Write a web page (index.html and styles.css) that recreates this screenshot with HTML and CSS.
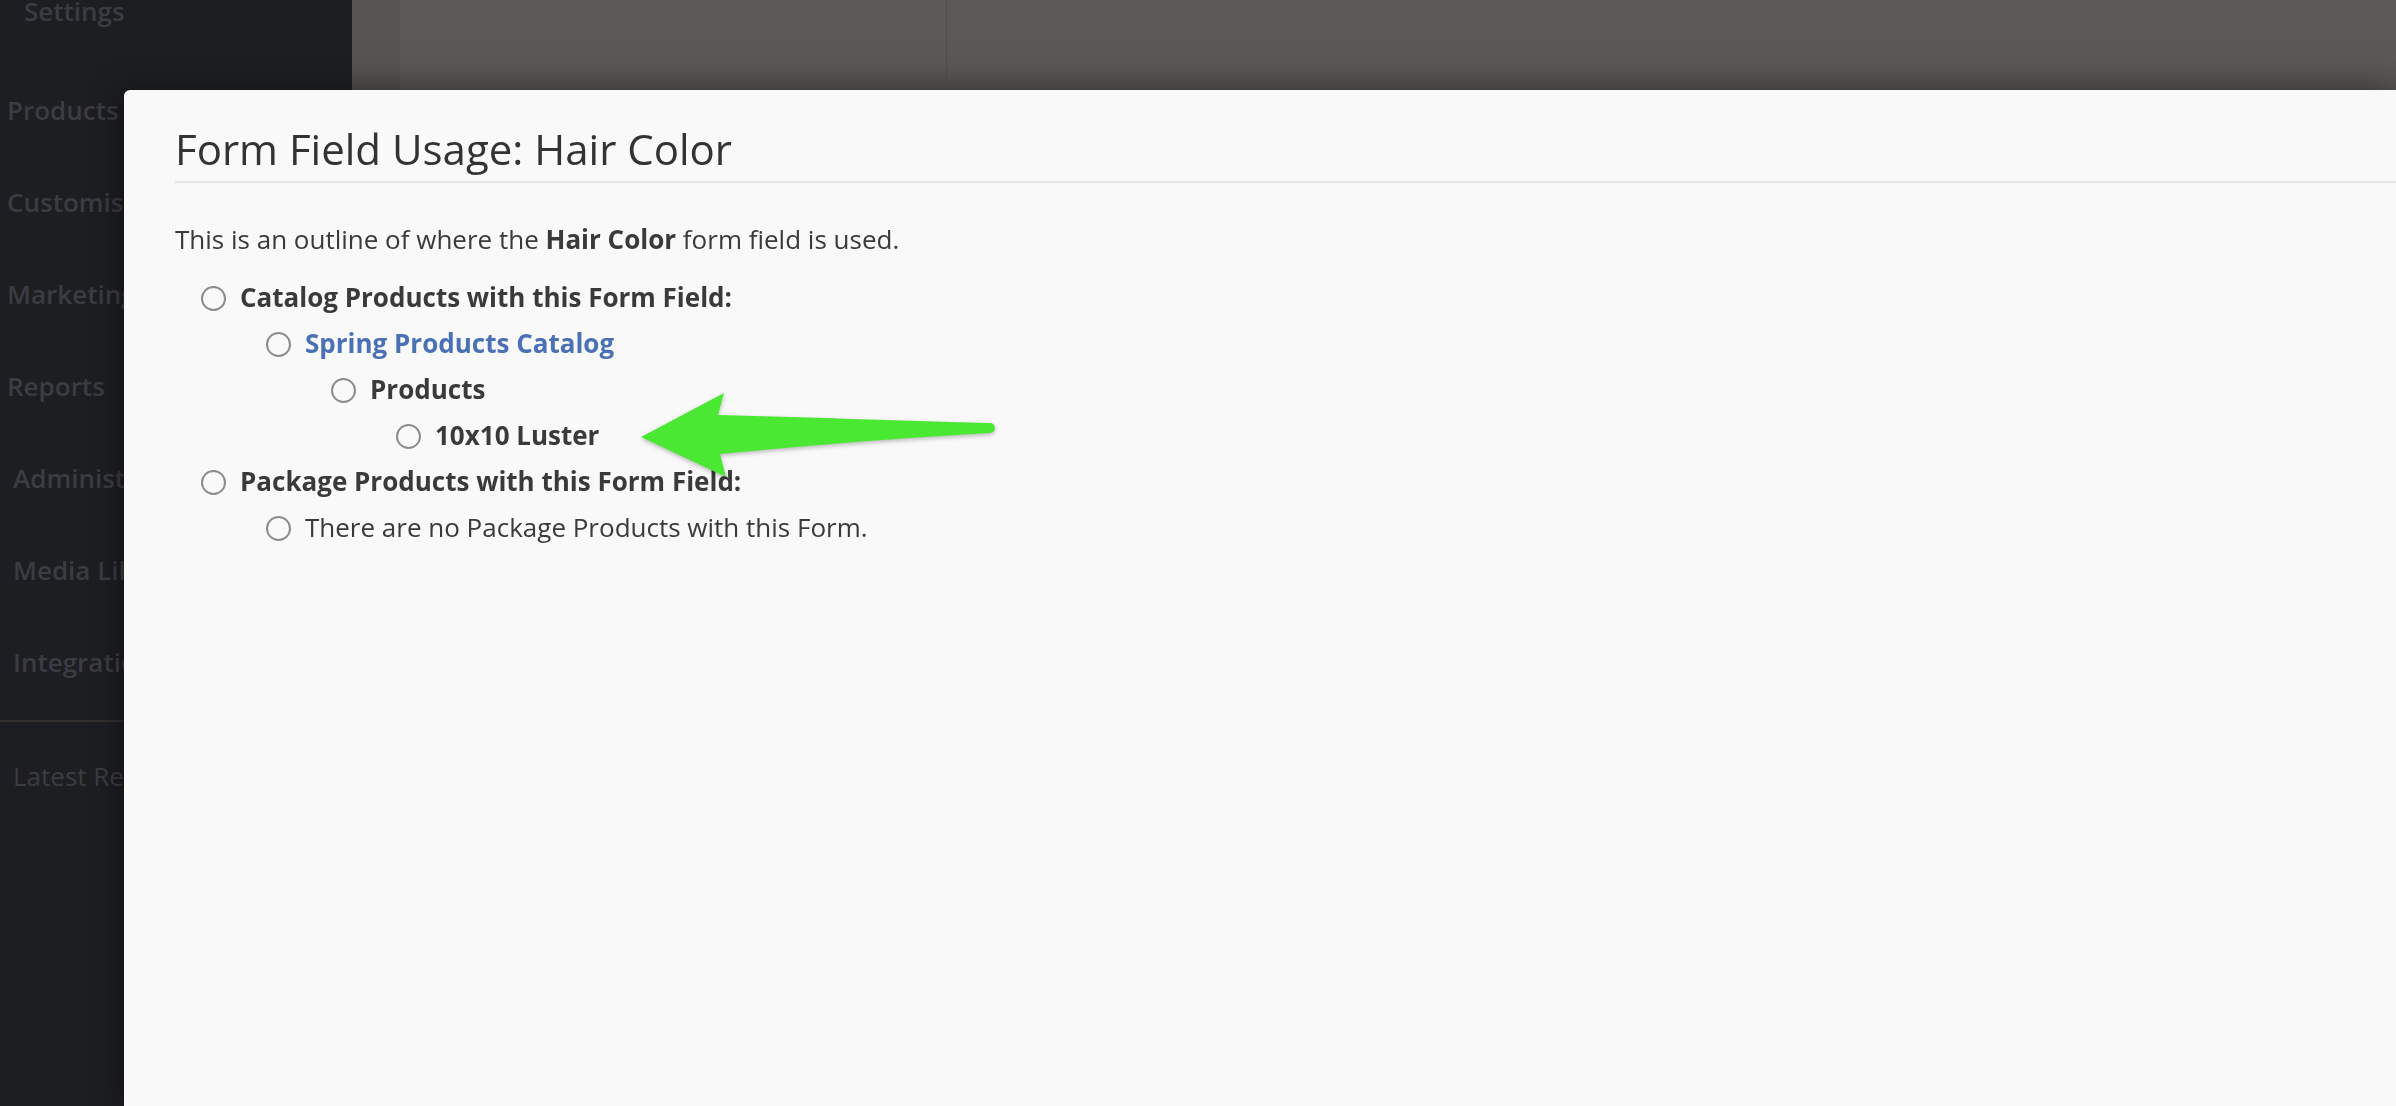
FILE: index.html
```html
<!DOCTYPE html>
<html lang="en">
<head>
    <meta charset="UTF-8">
    <title>Form Field Usage: Hair Color</title>
    <link rel="stylesheet" href="styles.css">
</head>
<body>
    <div class="app">
        <aside class="sidebar">
            <div class="nav-item nav-sub">Settings</div>
            <div class="nav-item">Products</div>
            <div class="nav-item">Customisation</div>
            <div class="nav-item">Marketing</div>
            <div class="nav-item">Reports</div>
            <div class="nav-item nav-indent">Administration</div>
            <div class="nav-item nav-indent">Media Library</div>
            <div class="nav-item nav-indent">Integrations</div>
            <div class="nav-divider"></div>
            <div class="nav-item nav-indent nav-light">Latest Releases</div>
        </aside>
        <main class="page">
            <div class="topbar">
                <div class="topbar-edge"></div>
                <div class="topbar-col"></div>
            </div>
        </main>
    </div>

    <!-- Usage modal -->
    <div class="modal">
        <h1 class="modal-title">Form Field Usage: Hair Color</h1>
        <p class="intro">This is an outline of where the <strong>Hair Color</strong> form field is used.</p>
        <ul class="outline">
            <li><span class="label">Catalog Products with this Form Field:</span>
                <ul>
                    <li><a href="#" class="label">Spring Products Catalog</a>
                        <ul>
                            <li><span class="label">Products</span>
                                <ul>
                                    <li><span class="label">10x10 Luster</span></li>
                                </ul>
                            </li>
                        </ul>
                    </li>
                </ul>
            </li>
            <li><span class="label">Package Products with this Form Field:</span>
                <ul>
                    <li>There are no Package Products with this Form.</li>
                </ul>
            </li>
        </ul>

        <svg class="arrow" width="380" height="100" viewBox="0 0 380 100">
            <path d="M11 52 L94 8 L88 30 Q230 34 360 38 A5 5 0 0 1 360 48 Q220 56 90 69 L96 92 Z" fill="#4be833"/>
        </svg>
    </div>
</body>
</html>
```

FILE: styles.css
```css
html, body {
    margin: 0;
    height: 100%;
    overflow: hidden;
}

body {
    font-family: "Open Sans", "Liberation Sans", sans-serif;
    background: #1d1e22;
}

.app {
    display: grid;
    grid-template-columns: 352px 1fr;
    height: 100%;
}

.sidebar {
    background: #1d1e22;
    color: #3b3c41;
    font-size: 26px;
    font-weight: 600;
    white-space: nowrap;
    overflow: hidden;
}

.nav-item {
    height: 92px;
    line-height: 92px;
    padding-left: 7px;
}

.nav-sub {
    height: 62px;
    line-height: 18px;
    padding-left: 24px;
    margin-top: 2px;
}

.nav-indent {
    padding-left: 13px;
}

.nav-light {
    font-weight: 400;
}

.nav-divider {
    height: 2px;
    background: #332f2e;
    margin: 12px 0 8px;
}

.page {
    background: #5a5957;
}

.topbar {
    display: flex;
    height: 90px;
    background: linear-gradient(to bottom, #5b5a58 0%, #595856 70%, #52504d 100%);
}

.topbar-edge {
    width: 48px;
    background: rgba(0, 0, 0, 0.04);
}

.topbar-col {
    width: 546px;
    border-right: 1px solid #4f4e4c;
}

/* modal */

.modal {
    position: fixed;
    left: 124px;
    top: 90px;
    right: 0;
    bottom: 0;
    background: #f9f9f9;
    border-top-left-radius: 6px;
    box-shadow: -6px 0 30px rgba(0, 0, 0, 0.35);
    padding: 36px 0 0 51px;
    color: #3a3a3a;
    font-size: 26px;
}

.modal-title {
    margin: 0;
    padding-bottom: 9px;
    border-bottom: 2px solid #e6e6e6;
    font-size: 42px;
    font-weight: 400;
    line-height: 46px;
    color: #333;
}

.intro {
    margin: 33px 0 12px;
    line-height: 46px;
}

.intro strong {
    font-weight: 700;
}

.outline,
.outline ul {
    list-style: none;
    margin: 0;
    padding: 0 0 0 65px;
}

.outline {
    padding-left: 26px;
}

.outline li {
    line-height: 46px;
}

.outline li::before {
    content: "";
    display: inline-block;
    width: 21px;
    height: 21px;
    border: 2px solid #8c8c8c;
    border-radius: 50%;
    vertical-align: middle;
    margin: -3px 14px 0 0;
}

.label {
    font-weight: 700;
}

a.label {
    color: #4a70b5;
    text-decoration: none;
}

.arrow {
    position: absolute;
    left: 506px;
    top: 295px;
    filter: drop-shadow(0 2px 2px rgba(0, 0, 0, 0.25));
}
```
